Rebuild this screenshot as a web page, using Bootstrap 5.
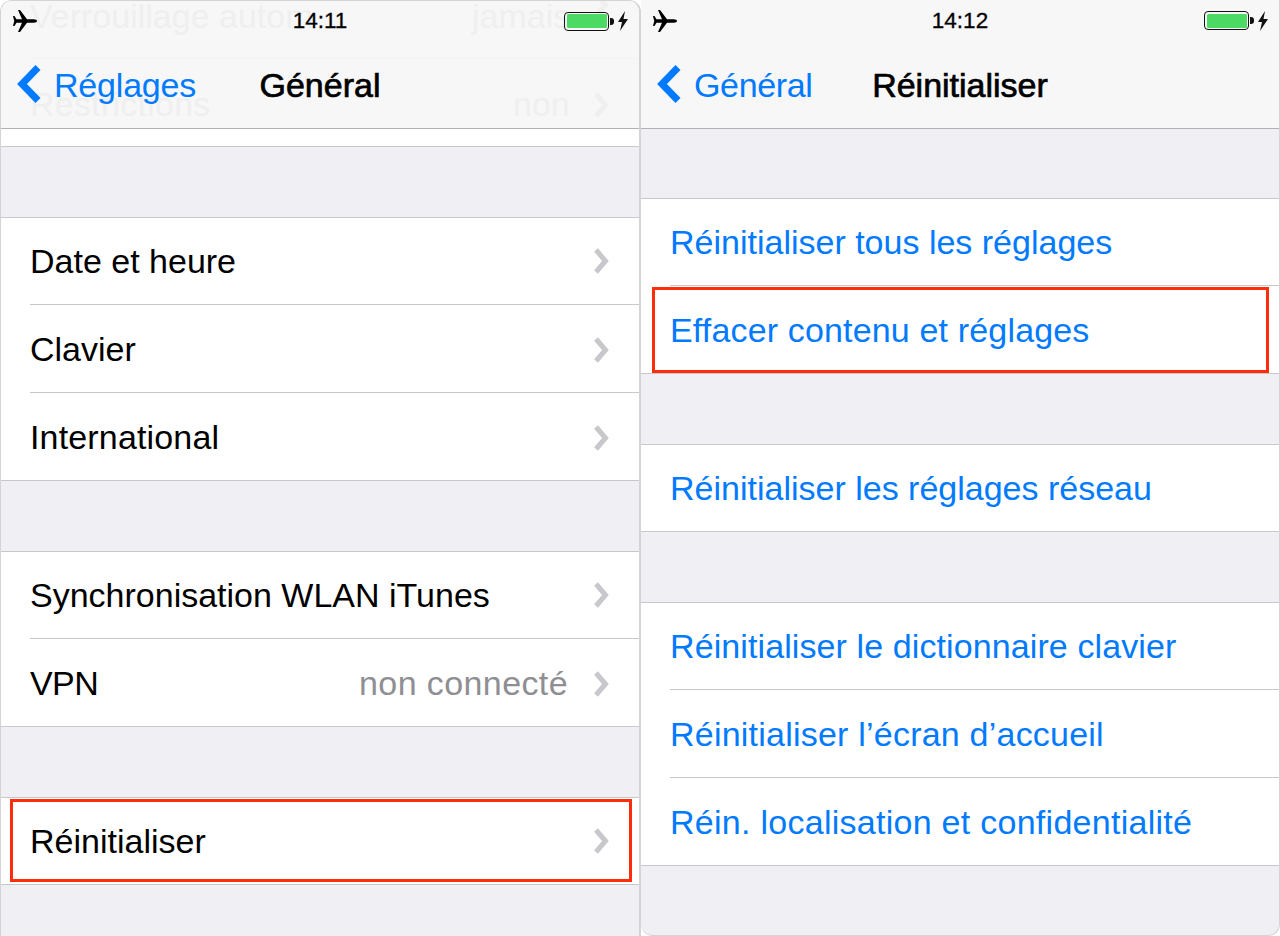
<!DOCTYPE html>
<html lang="fr">
<head>
  <meta charset="UTF-8">
  <title>Réinitialiser - Réglages iOS</title>
  <link href="https://cdn.jsdelivr.net/npm/bootstrap@5.3.0/dist/css/bootstrap.min.css" rel="stylesheet">
  <style>
    html, body { height: 936px; overflow: hidden; }
    body { font-family: "Liberation Sans", Arial, sans-serif; font-size: 34px; color: #000; background: #fff; }
    .phone { height: 936px; background: #efeff4; overflow: hidden; position: relative; }
    .phone-left { width: 641px; border-left: 1px solid #d4d4d4; border-right: 2px solid #d4d4d4; border-top: 1px solid #d4d4d4; border-radius: 12px 12px 0 0; }
    .phone-right { width: 639px; border-right: 1px solid #d4d4d4; border-bottom: 1px solid #d4d4d4; border-radius: 0 0 12px 12px; }
    .top-bar { height: 129px; background: #f7f7f8; border-bottom: 1px solid #b2b2b2; position: relative; overflow: hidden; }
    .phone-left .top-bar { height: 128px; }
    .status-bar { height: 40px; position: relative; padding: 0 11px 0 12px; }
    .phone-right .status-bar { height: 41px; }
    .status-bar .clock { font-size: 22.5px; -webkit-text-stroke: .3px #000; }
    .plane { width: 24px; height: 22px; }
    .batt { width: 45px; height: 19px; border: 1.5px solid #111; border-radius: 4px; padding: 1.5px; }
    .batt-fill { background: #4cd964; height: 100%; border-radius: 1.5px; }
    .batt-nub { width: 4px; height: 7px; background: #111; border-radius: 0 3px 3px 0; margin-left: 1px; }
    .bolt { width: 10px; height: 20px; margin-left: 4px; }
    .nav-row { height: 88px; display: grid; grid-template-columns: 1fr auto 1fr; align-items: center; position: relative; }
    .back-link { color: #007aff; display: flex; align-items: center; padding-left: 15px; }
    .back-arrow { width: 26px; height: 40px; margin-right: 12px; }
    .nav-title { font-size: 34px; -webkit-text-stroke: .7px #000; }
    .ghost { position: absolute; color: #efefef; line-height: 40px; white-space: nowrap; }
    .ghost-a { left: 29px; top: -5px; }
    .ghost-b { left: 471px; top: -5px; }
    .ghost-c { left: 29px; top: 83px; letter-spacing: .25px; }
    .ghost-d { left: 512px; top: 83px; }
    .ghost-chev { position: absolute; left: 590px; width: 18px; height: 28px; }
    .ghost-chev-a { top: -10px; }
    .ghost-chev-b { top: 90px; }
    .ghost-line { position: absolute; left: 30px; right: 0; top: 57px; height: 1px; background: #f3f3f3; }
    .strip { height: 18px; background: #fff; border-bottom: 1px solid #c8c7cc; }
    .phone-right .groups { padding-top: 69px; }
    .groups { padding-top: 70px; display: flex; flex-direction: column; gap: 70px; }
    .set-group { border-radius: 0; border-top: 1px solid #c8c7cc; border-bottom: 1px solid #c8c7cc; background: #fff; }
    .set-row { background: #fff; padding: 0 0 0 29px; border: 0; border-radius: 0; color: #000; }
    .set-row-in { height: 88px; padding-right: 30px; border-bottom: 1px solid #c8c7cc; }
    .set-row + .set-row .set-row-in { padding-top: 2px; }
    .set-row:first-child .set-row-in { height: 87px; }
    .set-row:last-child .set-row-in { height: 87px; border-bottom: 0; }
    .set-row:only-child .set-row-in { height: 86px; }
    .set-row.act { color: #007aff; }
    .detail { color: #8e8e93; margin-right: 23px; }
    .chev { width: 18px; height: 28px; flex: none; }
    .red-box { position: absolute; border: 3px solid #ff2d0a; pointer-events: none; }
    .red-a { left: 9px; top: 798px; width: 622px; height: 83px; }
    .red-b { left: 11px; top: 287px; width: 617px; height: 86px; }
    /* largeur du texte, ligne par ligne */
    .ls-n6 { letter-spacing: -.6px; }
    .ls-n4 { letter-spacing: -.35px; }
    .ls-n2 { letter-spacing: -.2px; }
    .ls-p1 { letter-spacing: .1px; }
    .ls-p2 { letter-spacing: .16px; }
    .ls-p3 { letter-spacing: .22px; }
    .ls-p4 { letter-spacing: .27px; }
    .ls-p5 { letter-spacing: .4px; }
  </style>
</head>
<body>
  <div class="d-flex">

    <!-- Général -->
    <div class="phone phone-left">
      <div class="top-bar">
        <div class="ghost ghost-a">Verrouillage autom</div>
        <div class="ghost ghost-b">jamais</div>
        <div class="ghost ghost-c">Restrictions</div>
        <div class="ghost ghost-d">non</div>
        <svg class="ghost-chev ghost-chev-a" viewBox="0 0 18 28"><polyline points="5,3 14.500,14 5,25" fill="none" stroke="#efefef" stroke-width="5"/></svg>
        <svg class="ghost-chev ghost-chev-b" viewBox="0 0 18 28"><polyline points="5,3 14.500,14 5,25" fill="none" stroke="#efefef" stroke-width="5"/></svg>
        <div class="ghost-line"></div>
        <div class="status-bar d-flex align-items-center justify-content-between">
          <svg class="plane" viewBox="13 9 24 22"><path fill="#000" d="M37 20c0-1-1.500-1.700-3-1.700h-7L20 9h-2l4 9.300h-5.500L14.500 15H13l1.200 5L13 25h1.500l2-3.300H22L18 31h2l7-9.300h7c1.500 0 3-.7 3-1.700z"/></svg>
          <span class="clock position-absolute top-50 start-50 translate-middle">14:11</span>
          <div class="d-flex align-items-center">
            <div class="batt"><div class="batt-fill"></div></div>
            <div class="batt-nub"></div>
            <svg class="bolt" viewBox="0 0 10 20"><path fill="#111" d="M7 0 0 11h4l-2 9 8-12H5.500z"/></svg>
          </div>
        </div>
        <div class="nav-row">
          <div class="back-link">
            <svg class="back-arrow" viewBox="0 0 26 40"><polyline points="22,2.500 6,19 22,35.500" fill="none" stroke="#007aff" stroke-width="7"/></svg>
            <span class="ls-n2">Réglages</span>
          </div>
          <div class="nav-title">Général</div>
        </div>
      </div>
      <div class="strip"></div>
      <div class="groups">
        <div class="list-group set-group">
          <div class="list-group-item set-row"><div class="set-row-in d-flex align-items-center justify-content-between"><span>Date et heure</span><svg class="chev" viewBox="0 0 18 28"><polyline points="5,3 14.500,14 5,25" fill="none" stroke="#c7c7cc" stroke-width="5"/></svg></div></div>
          <div class="list-group-item set-row"><div class="set-row-in d-flex align-items-center justify-content-between"><span>Clavier</span><svg class="chev" viewBox="0 0 18 28"><polyline points="5,3 14.500,14 5,25" fill="none" stroke="#c7c7cc" stroke-width="5"/></svg></div></div>
          <div class="list-group-item set-row"><div class="set-row-in d-flex align-items-center justify-content-between"><span class="ls-p2">International</span><svg class="chev" viewBox="0 0 18 28"><polyline points="5,3 14.500,14 5,25" fill="none" stroke="#c7c7cc" stroke-width="5"/></svg></div></div>
        </div>
        <div class="list-group set-group">
          <div class="list-group-item set-row"><div class="set-row-in d-flex align-items-center justify-content-between"><span>Synchronisation WLAN iTunes</span><svg class="chev" viewBox="0 0 18 28"><polyline points="5,3 14.500,14 5,25" fill="none" stroke="#c7c7cc" stroke-width="5"/></svg></div></div>
          <div class="list-group-item set-row"><div class="set-row-in d-flex align-items-center"><span class="me-auto ls-n6">VPN</span><span class="detail ls-p5">non connecté</span><svg class="chev" viewBox="0 0 18 28"><polyline points="5,3 14.500,14 5,25" fill="none" stroke="#c7c7cc" stroke-width="5"/></svg></div></div>
        </div>
        <div class="list-group set-group">
          <div class="list-group-item set-row"><div class="set-row-in d-flex align-items-center justify-content-between"><span>Réinitialiser</span><svg class="chev" viewBox="0 0 18 28"><polyline points="5,3 14.500,14 5,25" fill="none" stroke="#c7c7cc" stroke-width="5"/></svg></div></div>
        </div>
      </div>
      <div class="red-box red-a"></div>
    </div>

    <!-- Réinitialiser -->
    <div class="phone phone-right">
      <div class="top-bar">
        <div class="status-bar d-flex align-items-center justify-content-between">
          <svg class="plane" viewBox="13 9 24 22"><path fill="#000" d="M37 20c0-1-1.500-1.700-3-1.700h-7L20 9h-2l4 9.300h-5.500L14.500 15H13l1.200 5L13 25h1.500l2-3.300H22L18 31h2l7-9.300h7c1.500 0 3-.7 3-1.700z"/></svg>
          <span class="clock position-absolute top-50 start-50 translate-middle">14:12</span>
          <div class="d-flex align-items-center">
            <div class="batt"><div class="batt-fill"></div></div>
            <div class="batt-nub"></div>
            <svg class="bolt" viewBox="0 0 10 20"><path fill="#111" d="M7 0 0 11h4l-2 9 8-12H5.500z"/></svg>
          </div>
        </div>
        <div class="nav-row">
          <div class="back-link">
            <svg class="back-arrow" viewBox="0 0 26 40"><polyline points="22,2.500 6,19 22,35.500" fill="none" stroke="#007aff" stroke-width="7"/></svg>
            <span class="ls-n4">Général</span>
          </div>
          <div class="nav-title">Réinitialiser</div>
        </div>
      </div>
      <div class="groups">
        <div class="list-group set-group">
          <div class="list-group-item set-row act"><div class="set-row-in d-flex align-items-center">Réinitialiser tous les réglages</div></div>
          <div class="list-group-item set-row act"><div class="set-row-in d-flex align-items-center ls-p2">Effacer contenu et réglages</div></div>
        </div>
        <div class="list-group set-group">
          <div class="list-group-item set-row act"><div class="set-row-in d-flex align-items-center">Réinitialiser les réglages réseau</div></div>
        </div>
        <div class="list-group set-group">
          <div class="list-group-item set-row act"><div class="set-row-in d-flex align-items-center ls-p1">Réinitialiser le dictionnaire clavier</div></div>
          <div class="list-group-item set-row act"><div class="set-row-in d-flex align-items-center ls-p3">Réinitialiser l’écran d’accueil</div></div>
          <div class="list-group-item set-row act"><div class="set-row-in d-flex align-items-center ls-p4">Réin. localisation et confidentialité</div></div>
        </div>
      </div>
      <div class="red-box red-b"></div>
    </div>
  </div>

  <script src="https://cdn.jsdelivr.net/npm/bootstrap@5.3.0/dist/js/bootstrap.bundle.min.js"></script>
</body>
</html>
